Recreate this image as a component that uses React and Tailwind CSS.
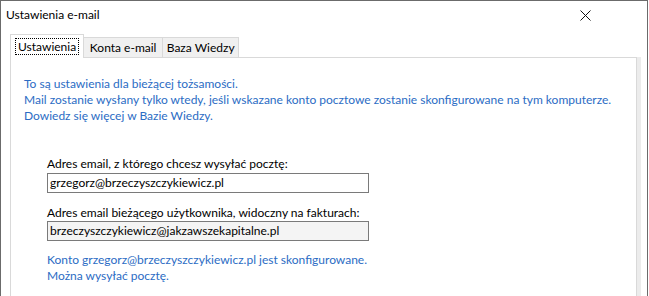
import React from "react";

const font = { fontFamily: 'Lato, "Noto Sans", sans-serif' };

function Tab({ label, active, width }) {
  if (active) {
    return (
      <div className="relative z-10 -mb-px flex h-[24px] items-center border border-b-0 border-[#d9d9d9] bg-white px-[4px]">
        <span className="border border-dotted border-black px-[2px] leading-[15px]">{label}</span>
      </div>
    );
  }
  return (
    <div className={`mt-[3px] flex h-[20px] items-center justify-center border border-l-0 border-b-0 border-[#d9d9d9] bg-[#f0f0f0] ${width}`}>
      {label}
    </div>
  );
}

export default function App() {
  return (
    <div
      className="h-[296px] w-[648px] overflow-hidden whitespace-nowrap border-l border-r border-t border-[#6b6b6b] bg-white text-[12px] text-black"
      style={font}
    >
      <div className="flex h-[33px] items-start justify-between pl-[5px] pr-[56px] pt-[5px]">
        <span>Ustawienia e-mail</span>
        <svg width="11" height="11" viewBox="0 0 11 11" className="mt-[4px]">
          <path d="M0.5 0.5 L10.5 10.5 M10.5 0.5 L0.5 10.5" stroke="#111" strokeWidth="1" />
        </svg>
      </div>
      <div className="ml-[9px] flex items-end">
        <Tab label="Ustawienia" active />
        <Tab label="Konta e-mail" width="w-[79px]" />
        <Tab label="Baza Wiedzy" width="w-[76px]" />
      </div>
      <div className="mr-[6px] ml-[9px] flex h-[260px]">
        <div className="flex-1 border border-[#d9d9d9] pl-[13px] pt-[18px]">
          <div className="leading-[16px] text-[#2b6cc4]">
            <p>To są ustawienia dla bieżącej tożsamości.</p>
            <p>Mail zostanie wysłany tylko wtedy, jeśli wskazane konto pocztowe zostanie skonfigurowane na tym komputerze.</p>
            <p>Dowiedz się więcej w Bazie Wiedzy.</p>
          </div>
          <div className="ml-[23px] mt-[32px] flex w-[322px] flex-col">
            <label className="leading-[15px]">Adres email, z którego chcesz wysyłać pocztę:</label>
            <div className="mt-[2px] flex h-[20px] items-center border border-[#7a7a7a] bg-white px-[2px]">
              grzegorz@brzeczyszczykiewicz.pl
            </div>
            <label className="mt-[12px] leading-[15px]">Adres email bieżącego użytkownika, widoczny na fakturach:</label>
            <div className="mt-[1px] flex h-[20px] items-center border border-[#7a7a7a] bg-[#f4f4f4] px-[2px]">
              brzeczyszczykiewicz@jakzawszekapitalne.pl
            </div>
            <div className="mt-[11px] leading-[16px] text-[#2b6cc4]">
              <p>Konto grzegorz@brzeczyszczykiewicz.pl jest skonfigurowane.</p>
              <p>Można wysyłać pocztę.</p>
            </div>
          </div>
        </div>
        <div className="w-[4px] bg-[#ececec]" />
      </div>
    </div>
  );
}
